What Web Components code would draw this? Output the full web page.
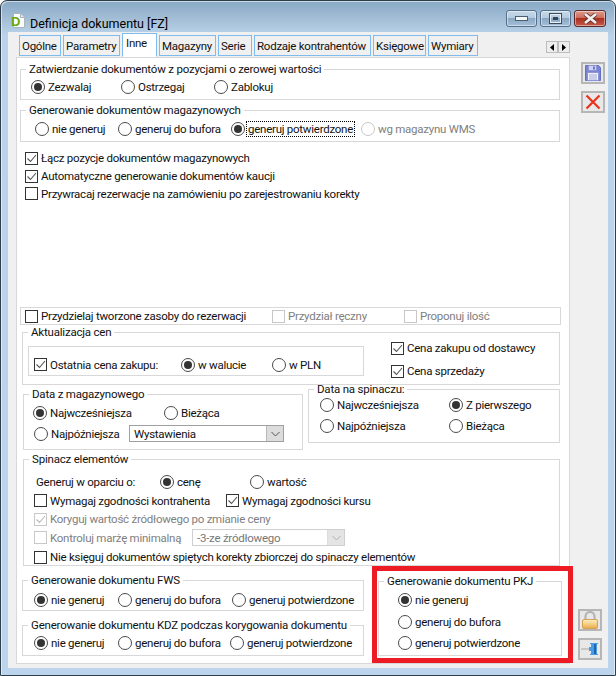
<!DOCTYPE html>
<html lang="pl">
<head>
<meta charset="utf-8">
<title>Definicja dokumentu [FZ]</title>
<style>
html, body { margin: 0; padding: 0; background: #fff; }
</style>
</head>
<body>
<doc-window></doc-window>
<script>
class DocRadio extends HTMLElement {
    constructor() {
        super();
        this.attachShadow({mode: 'open'});
    }

    connectedCallback() {
        this.shadowRoot.innerHTML = `
        <style>
            :host { display: inline-flex; align-items: center; white-space: nowrap; flex: none; color: #111; }
            :host([disabled]) { color: #808080; }
            .dot {
                width: 14px; height: 14px; box-sizing: border-box; flex: none;
                border: 1px solid #4a4a4a; border-radius: 50%;
                background: #fff; margin-right: 1px; position: relative;
            }
            :host([disabled]) .dot { border-color: #c8c8c8; }
            :host([checked]) .dot::after {
                content: ''; position: absolute; left: 2px; top: 2px;
                width: 8px; height: 8px; border-radius: 50%; background: #333;
            }
            .txt { padding: 0 1px; line-height: 14px; border: 1px solid transparent; }
            :host([focused]) .txt { border: 1px dotted #000; }
        </style>
        <span class="dot"></span><span class="txt"><slot></slot></span>
        `;
    }
}

class DocCheck extends HTMLElement {
    constructor() {
        super();
        this.attachShadow({mode: 'open'});
    }

    connectedCallback() {
        this.shadowRoot.innerHTML = `
        <style>
            :host { display: inline-flex; align-items: center; white-space: nowrap; flex: none; color: #111; }
            :host([disabled]) { color: #808080; }
            .box {
                width: 13px; height: 13px; box-sizing: border-box; flex: none;
                border: 1px solid #333; background: #fff; margin-right: 3px;
            }
            :host([disabled]) .box { border-color: #c8c8c8; }
            svg { display: none; width: 11px; height: 11px; }
            :host([checked]) svg { display: block; }
            path { fill: none; stroke: #555; stroke-width: 1.1; }
            :host([disabled]) path { stroke: #b8b8b8; }
        </style>
        <span class="box"><svg viewBox="0 0 11 11"><path d="M1.5 5.5 L4.5 8.5 L10 2"/></svg></span><span><slot></slot></span>
        `;
    }
}

class DocCombo extends HTMLElement {
    constructor() {
        super();
        this.attachShadow({mode: 'open'});
    }

    connectedCallback() {
        this.shadowRoot.innerHTML = `
        <style>
            :host {
                display: flex; align-items: center; box-sizing: border-box; flex: none;
                border: 1px solid #a0a0a0; background: #fff; color: #111; white-space: nowrap;
            }
            :host([disabled]) { border-color: #cfcfcf; color: #777; }
            .val { flex: 1; padding-left: 4px; }
            .arrow {
                width: 16px; align-self: stretch; background: #dcdcdc; border-left: 1px solid #b8b8b8;
                display: flex; align-items: center; justify-content: center;
            }
            :host([disabled]) .arrow { background: #e4e4e4; border-left-color: #dcdcdc; }
            path { fill: none; stroke: #555; stroke-width: 1; }
            :host([disabled]) path { stroke: #b0b0b0; }
        </style>
        <span class="val"><slot></slot></span>
        <span class="arrow"><svg width="9" height="6" viewBox="0 0 9 6"><path d="M0.5 1 L4.5 5 L8.5 1"/></svg></span>
        `;
    }
}

class DocGroup extends HTMLElement {
    constructor() {
        super();
        this.attachShadow({mode: 'open'});
    }

    connectedCallback() {
        this.shadowRoot.innerHTML = `
        <style>
            :host { display: block; box-sizing: border-box; flex: none; }
            fieldset {
                margin: 0; padding: 0; box-sizing: border-box; width: 100%; height: 100%;
                border: 1px solid #d8d8d8; min-width: 0;
            }
            legend { margin-left: 5px; padding: 0 3px; line-height: 14px; color: #111; white-space: nowrap; letter-spacing: -.2px; }
        </style>
        <fieldset><legend>${this.getAttribute('legend')}</legend><slot></slot></fieldset>
        `;
    }
}

class DocTab extends HTMLElement {
    constructor() {
        super();
        this.attachShadow({mode: 'open'});
    }

    connectedCallback() {
        this.shadowRoot.innerHTML = `
        <style>
            :host {
                display: block; box-sizing: border-box; flex: none; height: 21px; margin-top: 3px;
                border: 1px solid #7ebbef; background: #f0f0f0; color: #111;
                padding: 2px 0 0 2px; line-height: 16px; white-space: nowrap; overflow: hidden;
            }
            :host([active]) {
                height: 24px; margin-top: 1px; margin-bottom: -1px; background: #fff;
                padding: 1px 0 0 3px; border-bottom-color: #fff; position: relative; z-index: 1;
            }
        </style>
        <slot></slot>
        `;
    }
}

class ToolButton extends HTMLElement {
    constructor() {
        super();
        this.attachShadow({mode: 'open'});
    }

    connectedCallback() {
        this.shadowRoot.innerHTML = `
        <style>
            :host {
                display: flex; align-items: center; justify-content: center; box-sizing: border-box; flex: none;
                width: 24px; height: 22px; border: 2px solid #b6b6b6; background: #e8e8e8;
            }
        </style>
        <slot></slot>
        `;
    }
}

class DocForm extends HTMLElement {
    constructor() {
        super();
        this.attachShadow({mode: 'open'});
    }

    connectedCallback() {
        this.shadowRoot.innerHTML = `
        <style>
            :host { display: flex; flex-direction: column; width: 554px; height: 607px; box-sizing: border-box;
                background: #fff; border: 1px solid #d8d8d8; padding-left: 3px; }
            .row { display: flex; align-items: center; }
            .stack { display: flex; flex-direction: column; }
            .plain { border: 1px solid #d8d8d8; box-sizing: border-box; }
            .inner { border: 1px solid #d8d8d8; box-sizing: border-box; width: 336px; height: 30px; margin: 7px 0 0 5px; }
            .red { border: 5px solid #ed1c24; box-sizing: border-box; width: 201px; height: 97px; margin-left: 8px; flex: none; }
        </style>

        <doc-group legend="Zatwierdzanie dokumentów z pozycjami o zerowej wartości" style="height:38px;width:540px;margin-top:4px">
            <div class="row" style="height:22px;padding-left:10px">
                <doc-radio checked style="width:90px">Zezwalaj</doc-radio>
                <doc-radio style="width:93px">Ostrzegaj</doc-radio>
                <doc-radio>Zablokuj</doc-radio>
            </div>
        </doc-group>

        <doc-group legend="Generowanie dokumentów magazynowych" style="height:39px;width:540px;margin-top:3px">
            <div class="row" style="height:24px;padding-left:14px">
                <doc-radio style="width:83px">nie generuj</doc-radio>
                <doc-radio style="width:113px">generuj do bufora</doc-radio>
                <doc-radio checked focused style="width:130px">generuj potwierdzone</doc-radio>
                <doc-radio disabled>wg magazynu WMS</doc-radio>
            </div>
        </doc-group>

        <div class="stack" style="margin:7px 0 0 5px">
            <doc-check checked style="height:18px">Łącz pozycje dokumentów magazynowych</doc-check>
            <doc-check checked style="height:18px">Automatyczne generowanie dokumentów kaucji</doc-check>
            <doc-check style="height:17px">Przywracaj rezerwacje na zamówieniu po zarejestrowaniu korekty</doc-check>
        </div>

        <div class="row plain" style="height:19px;width:541px;margin-top:105px;padding-left:4px">
            <doc-check style="width:247px">Przydzielaj tworzone zasoby do rezerwacji</doc-check>
            <doc-check disabled style="width:132px">Przydział ręczny</doc-check>
            <doc-check disabled>Proponuj ilość</doc-check>
        </div>

        <doc-group legend="Aktualizacja cen" style="height:60px;width:538px;margin:0 0 0 2px">
            <div class="row" style="align-items:flex-start">
                <div class="inner row" style="padding:7px 0 0 5px">
                    <doc-check checked style="width:147px">Ostatnia cena zakupu:</doc-check>
                    <doc-radio checked style="width:91px">w walucie</doc-radio>
                    <doc-radio>w PLN</doc-radio>
                </div>
                <div class="stack" style="margin-left:27px;gap:5px">
                    <doc-check checked style="height:18px">Cena zakupu od dostawcy</doc-check>
                    <doc-check checked style="height:18px">Cena sprzedaży</doc-check>
                </div>
            </div>
        </doc-group>

        <div class="row" style="align-items:flex-start;margin:-3px 0 0 3px">
            <doc-group legend="Data z magazynowego" style="height:63px;width:280px;margin-top:5px">
                <div class="row" style="height:24px;padding-left:9px">
                    <doc-radio checked style="width:131px">Najwcześniejsza</doc-radio>
                    <doc-radio>Bieżąca</doc-radio>
                </div>
                <div class="row" style="height:17px;padding-left:10px">
                    <doc-radio style="width:95px">Najpóźniejsza</doc-radio>
                    <doc-combo style="width:155px;height:17px">Wystawienia</doc-combo>
                </div>
            </doc-group>
            <doc-group legend="Data na spinaczu:" style="height:61px;width:252px;margin-left:5px">
                <div class="row" style="height:18px;padding-left:11px">
                    <doc-radio style="width:129px">Najwcześniejsza</doc-radio>
                    <doc-radio checked>Z pierwszego</doc-radio>
                </div>
                <div class="row" style="height:24px;padding-left:11px">
                    <doc-radio style="width:129px">Najpóźniejsza</doc-radio>
                    <doc-radio>Bieżąca</doc-radio>
                </div>
            </doc-group>
        </div>

        <doc-group legend="Spinacz elementów" style="height:114px;width:537px;margin:2px 0 0 3px">
            <div class="stack" style="padding:7px 0 0 10px">
                <div class="row" style="height:18px;padding-left:2px">
                    <span style="width:124px;color:#111">Generuj w oparciu o:</span>
                    <doc-radio checked style="width:90px">cenę</doc-radio>
                    <doc-radio>wartość</doc-radio>
                </div>
                <div class="row" style="height:19px">
                    <doc-check style="width:192px">Wymagaj zgodności kontrahenta</doc-check>
                    <doc-check checked>Wymagaj zgodności kursu</doc-check>
                </div>
                <div class="row" style="height:18px">
                    <doc-check checked disabled>Koryguj wartość źródłowego po zmianie ceny</doc-check>
                </div>
                <div class="row" style="height:19px">
                    <doc-check disabled style="width:158px">Kontroluj marżę minimalną</doc-check>
                    <doc-combo disabled style="width:153px;height:17px">-3-ze źródłowego</doc-combo>
                </div>
                <div class="row" style="height:20px">
                    <doc-check>Nie księguj dokumentów spiętych korekty zbiorczej do spinaczy elementów</doc-check>
                </div>
            </div>
        </doc-group>

        <div class="row" style="align-items:flex-start">
            <div class="stack" style="margin:7px 0 0 2px;gap:7px">
                <doc-group legend="Generowanie dokumentu FWS" style="height:38px;width:342px">
                    <div class="row" style="height:26px;padding-left:11px">
                        <doc-radio checked style="width:84px">nie generuj</doc-radio>
                        <doc-radio style="width:114px">generuj do bufora</doc-radio>
                        <doc-radio>generuj potwierdzone</doc-radio>
                    </div>
                </doc-group>
                <doc-group legend="Generowanie dokumentu KDZ podczas korygowania dokumentu" style="height:38px;width:342px">
                    <div class="row" style="height:22px;padding-left:11px">
                        <doc-radio checked style="width:84px">nie generuj</doc-radio>
                        <doc-radio style="width:112px">generuj do bufora</doc-radio>
                        <doc-radio>generuj potwierdzone</doc-radio>
                    </div>
                </doc-group>
            </div>
            <div class="red">
                <doc-group legend="Generowanie dokumentu PKJ" style="height:82px;width:184px;margin:3px 0 0 1px">
                    <div class="stack" style="padding:1px 0 0 19px">
                        <doc-radio checked style="height:22px">nie generuj</doc-radio>
                        <doc-radio style="height:21px">generuj do bufora</doc-radio>
                        <doc-radio style="height:22px">generuj potwierdzone</doc-radio>
                    </div>
                </doc-group>
            </div>
        </div>
        `;
    }
}

class DocWindow extends HTMLElement {
    constructor() {
        super();
        this.attachShadow({mode: 'open'});
    }

    connectedCallback() {
        this.shadowRoot.innerHTML = `
        <style>
            :host {
                display: flex; flex-direction: column; box-sizing: border-box; width: 616px; height: 676px;
                font: 11.5px/14px Roboto, "Open Sans", sans-serif; color: #111; letter-spacing: -.25px;
                border: 1px solid #2e3e4a; border-radius: 7px 7px 0 0;
                background: linear-gradient(#88a9c6 0, #a3bed6 18px, #bad3ea 34px, #bcd5ed 100%);
                box-shadow: inset 1px 1px 0 rgba(255,255,255,.55), inset -1px 0 0 rgba(255,255,255,.55);
            }
            .title { display: flex; align-items: flex-start; height: 31px; flex: none; padding: 9px 9px 0 10px; box-sizing: border-box; }
            .title .icon { width: 14px; height: 15px; margin: 3px 5px 0 0; flex: none; }
            .title .name { flex: 1; font-size: 12.5px; line-height: 16px; padding-top: 6px; color: #000; letter-spacing: 0; }
            .wb {
                width: 31px; height: 17px; box-sizing: border-box; margin-left: 3px; flex: none;
                border: 1px solid #56708a; border-radius: 3px; display: flex; align-items: center; justify-content: center;
                background: linear-gradient(#c6d8e9 0, #b5cbdf 45%, #8aa8c4 50%, #a5bfd7 100%);
                box-shadow: inset 0 0 0 1px rgba(255,255,255,.45);
            }
            .wb.close { width: 32px; background: linear-gradient(#dd9a8e 0, #cf6d5c 45%, #ad2f1e 50%, #c2594a 100%); border-color: #5a2a2a; }
            .client { flex: 1; display: flex; margin: 0 7px 7px 7px; background: #f0f0f0; padding-left: 8px; min-height: 0; }
            .main { width: 554px; flex: none; display: flex; flex-direction: column; }
            .tabs { display: flex; gap: 2px; height: 25px; padding-left: 3px; flex: none; position: relative; }
            .scroll { display: flex; margin: 9px 0 0 auto; }
            .scroll span {
                width: 12px; height: 12px; box-sizing: border-box; border: 1px solid #bdbdbd; background: #eee;
                display: flex; align-items: center; justify-content: center;
            }
            .scroll svg { display: block; }
            .side { flex: 1; display: flex; flex-direction: column; justify-content: space-between; padding: 30px 0 8px 8px; }
            .side div { display: flex; flex-direction: column; }
        </style>
        <div class="title">
            <svg class="icon" viewBox="0 0 14 15">
                <path d="M2.5 .5 H9.5 L13.5 4.5 V14.5 H2.5 Z" fill="#fdfdfd" stroke="#a9b4bd"/>
                <path d="M9.5 .5 V4.5 H13.5" fill="#dfe6ec" stroke="#a9b4bd"/>
                <text x="0" y="12.5" font-family="Liberation Sans" font-weight="bold" font-size="13" fill="#6aa80f">D</text>
            </svg>
            <span class="name">Definicja dokumentu [FZ]</span>
            <span class="wb"><svg width="13" height="5"><rect x=".5" y=".5" width="12" height="4" fill="#f4f6f8" stroke="#4b5f72"/></svg></span>
            <span class="wb"><svg width="13" height="11"><rect x=".5" y=".5" width="12" height="10" fill="none" stroke="#3a4d60"/><rect x="1.5" y="1.5" width="10" height="8" fill="none" stroke="#e8eef4"/><rect x="4" y="4" width="5" height="3" fill="#31465a"/></svg></span>
            <span class="wb close"><svg width="17" height="11" viewBox="0 0 17 11"><path d="M3 1 L14 10 M14 1 L3 10" stroke="#5a3a36" stroke-width="4.2"/><path d="M3 1 L14 10 M14 1 L3 10" stroke="#f4eeec" stroke-width="2.6"/></svg></span>
        </div>
        <div class="client">
            <div class="main">
                <div class="tabs">
                    <doc-tab style="width:42px">Ogólne</doc-tab>
                    <doc-tab style="width:57px">Parametry</doc-tab>
                    <doc-tab active style="width:35px">Inne</doc-tab>
                    <doc-tab style="width:57px">Magazyny</doc-tab>
                    <doc-tab style="width:34px">Serie</doc-tab>
                    <doc-tab style="width:117px">Rodzaje kontrahentów</doc-tab>
                    <doc-tab style="width:53px">Księgowe</doc-tab>
                    <doc-tab style="width:50px">Wymiary</doc-tab>
                    <div class="scroll">
                        <span><svg width="4" height="7"><path d="M4 0 V7 L0 3.5 Z" fill="#000"/></svg></span>
                        <span><svg width="4" height="7"><path d="M0 0 V7 L4 3.5 Z" fill="#000"/></svg></span>
                    </div>
                </div>
                <doc-form></doc-form>
            </div>
            <div class="side">
                <div style="gap:7px;margin-left:3px">
                    <tool-button>
                        <svg width="16" height="16" viewBox="0 0 16 16">
                            <path d="M.5 .5 H13.5 L15.5 2.5 V15.5 H.5 Z" fill="#7a84d2" stroke="#6470c0"/>
                            <rect x="3.5" y=".5" width="8" height="5" fill="#cfd3f2" stroke="#8d95d8"/>
                            <rect x="8" y="1.5" width="2" height="3" fill="#6f79cc"/>
                            <rect x="2.5" y="7.5" width="11" height="8" fill="#eef0fa" stroke="#8d95d8"/>
                            <path d="M4 10 H12 M4 12 H12 M4 14 H12" stroke="#a5abdc"/>
                        </svg>
                    </tool-button>
                    <tool-button>
                        <svg width="16" height="16" viewBox="0 0 16 16">
                            <path d="M1.5 1.5 L14.5 14.5 M14.5 1.5 L1.5 14.5" stroke="#e8321e" stroke-width="2.2"/>
                        </svg>
                    </tool-button>
                </div>
                <div style="gap:7px">
                    <tool-button>
                        <svg width="16" height="18" viewBox="0 0 16 18">
                            <defs><linearGradient id="gold" x1="0" y1="0" x2="0" y2="1"><stop offset="0" stop-color="#fdf0c8"/><stop offset=".5" stop-color="#f6cf82"/><stop offset="1" stop-color="#e6a84e"/></linearGradient></defs>
                            <path d="M3.5 9 V5.5 a4.5 4.5 0 0 1 9 0 V9" fill="none" stroke="#b4b4b4" stroke-width="2.2"/>
                            <rect x=".5" y="8.5" width="15" height="9" rx="1.5" fill="url(#gold)" stroke="#d8a050"/>
                        </svg>
                    </tool-button>
                    <tool-button>
                        <svg width="18" height="12" viewBox="0 0 18 12">
                            <path d="M0 6 H9" stroke="#a8a8a8" stroke-width="1"/>
                            <path d="M8 4 H10 V1 H9 V0 H17 V1 H16 V11 H17 V12 H9 V11 H10 V8 H8 Z" fill="#4a9ae4"/>
                            <rect x="13" y="1" width="2" height="10" fill="#1f66b0"/>
                        </svg>
                    </tool-button>
                </div>
            </div>
        </div>
        `;
    }
}

customElements.define('doc-radio', DocRadio);
customElements.define('doc-check', DocCheck);
customElements.define('doc-combo', DocCombo);
customElements.define('doc-group', DocGroup);
customElements.define('doc-tab', DocTab);
customElements.define('tool-button', ToolButton);
customElements.define('doc-form', DocForm);
customElements.define('doc-window', DocWindow);
</script>
</body>
</html>
